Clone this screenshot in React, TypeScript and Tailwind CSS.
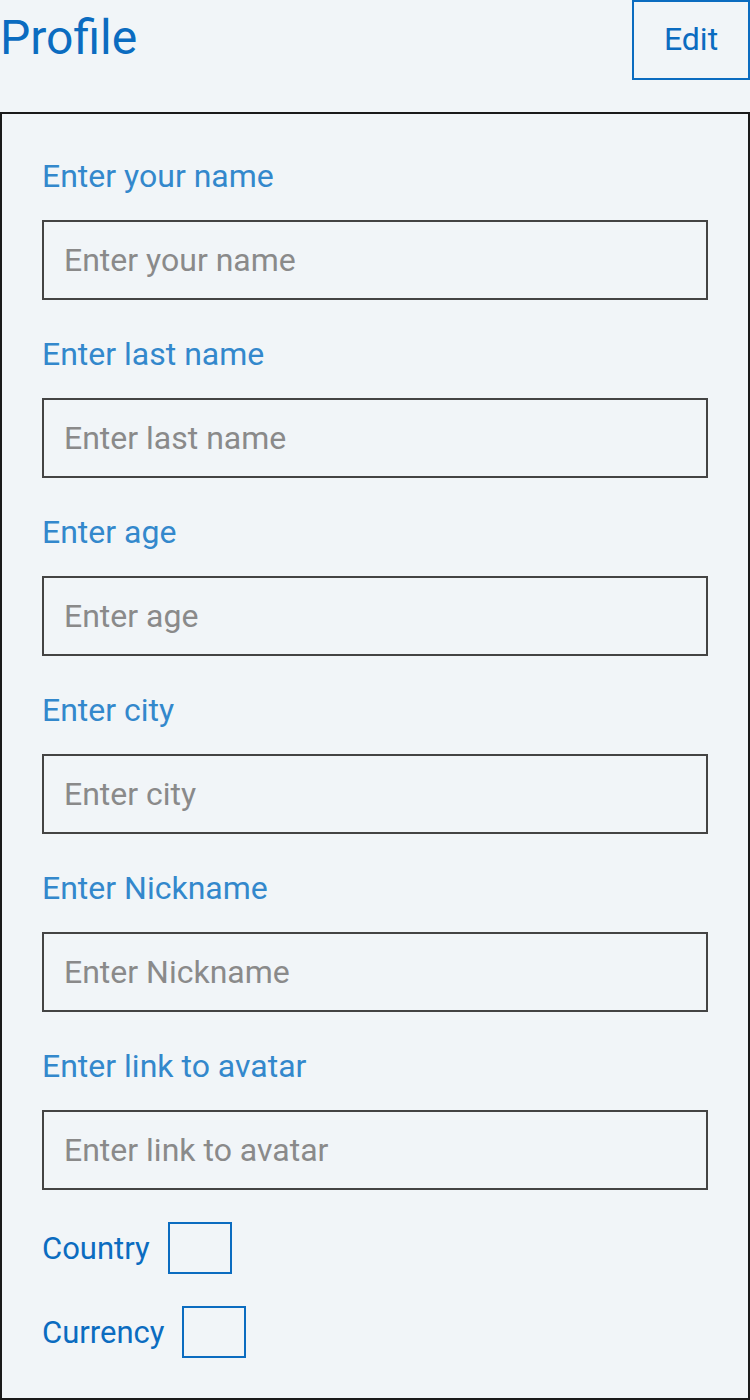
import React from "react";

const fields = [
  "Enter your name",
  "Enter last name",
  "Enter age",
  "Enter city",
  "Enter Nickname",
  "Enter link to avatar",
];

export default function App() {
  return (
    <div
      className="min-h-[1400px] w-[750px] bg-[#f1f5f8]"
      style={{ fontFamily: "Roboto, 'Noto Sans', sans-serif" }}
    >
      <div className="flex h-[112px] items-start justify-between">
        <h1 className="mt-[10px] text-[48px] leading-[56px] text-[#0b6cc0]">Profile</h1>
        <button className="flex h-[80px] w-[118px] items-center justify-center border-2 border-[#0b6cc0] pb-[2px] text-[32px] text-[#0b6cc0]">
          Edit
        </button>
      </div>
      <div className="flex min-h-[1288px] flex-col border-2 border-[#1a1a1a] px-[40px] pb-[40px] pt-[44px]">
        {fields.map((f) => (
          <div key={f} className="mb-[36px] flex flex-col">
            <label className="mb-[25px] text-[32px] leading-[37px] text-[#3388cc]">{f}</label>
            <input
              placeholder={f}
              className="h-[80px] w-full border-2 border-[#444444] bg-transparent px-[20px] text-[32px] text-[#333] outline-none placeholder:text-[#8a8a8a]"
            />
          </div>
        ))}
        <div className="mt-[-4px] flex items-center gap-[18px]">
          <span className="text-[31px] leading-[37px] text-[#0b6cc0]">Country</span>
          <div className="h-[52px] w-[64px] border-2 border-[#0b6cc0]" />
        </div>
        <div className="mt-[32px] flex items-center gap-[18px]">
          <span className="text-[31px] leading-[37px] text-[#0b6cc0]">Currency</span>
          <div className="h-[52px] w-[64px] border-2 border-[#0b6cc0]" />
        </div>
      </div>
    </div>
  );
}
